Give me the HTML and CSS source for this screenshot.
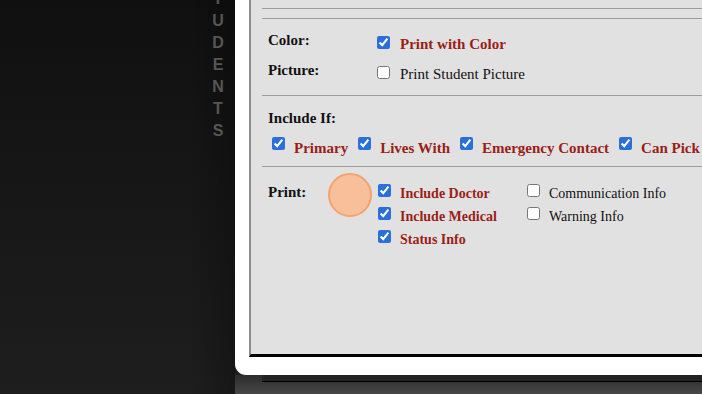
FILE: index.html
```html
<!DOCTYPE html>
<html lang="en">
<head>
  <meta charset="UTF-8" />
  <meta name="viewport" content="width=device-width, initial-scale=1" />
  <title>Student Print Options</title>
  <link rel="stylesheet" href="styles.css">
</head>
<body>
  <div class="screen">

    <!-- Sidebar title -->
    <aside class="sidebar">
      <div class="vtitle">
        <span>T</span><span>U</span><span>D</span><span>E</span><span>N</span><span>T</span><span>S</span>
      </div>
    </aside>

    <main class="main">
      <div class="panel">
        <div class="box">
          <hr class="rule">
          <hr class="rule second">

          <!-- Color / picture -->
          <section class="group g-output">
            <div class="field">
              <div class="field-label">Color:</div>
              <div class="field-opts">
                <label class="opt strong"><input type="checkbox" checked><span>Print with Color</span></label>
              </div>
            </div>
            <div class="field">
              <div class="field-label">Picture:</div>
              <div class="field-opts">
                <label class="opt"><input type="checkbox"><span>Print Student Picture</span></label>
              </div>
            </div>
          </section>

          <hr class="rule">

          <!-- Include if -->
          <section class="group g-include">
            <div class="field-label">Include If:</div>
            <div class="inline-opts">
              <label class="opt strong"><input type="checkbox" checked><span>Primary</span></label>
              <label class="opt strong"><input type="checkbox" checked><span>Lives With</span></label>
              <label class="opt strong"><input type="checkbox" checked><span>Emergency Contact</span></label>
              <label class="opt strong"><input type="checkbox" checked><span>Can Pick Up</span></label>
            </div>
          </section>

          <hr class="rule">

          <!-- Print -->
          <section class="group g-print">
            <div class="field">
              <div class="field-label">Print:</div>
              <div class="opt-cols">
                <div class="opt-col">
                  <label class="opt strong"><input type="checkbox" checked><span>Include Doctor</span></label>
                  <label class="opt strong"><input type="checkbox" checked><span>Include Medical</span></label>
                  <label class="opt strong"><input type="checkbox" checked><span>Status Info</span></label>
                </div>
                <div class="opt-col">
                  <label class="opt"><input type="checkbox"><span>Communication Info</span></label>
                  <label class="opt"><input type="checkbox"><span>Warning Info</span></label>
                </div>
              </div>
            </div>
            <span class="click-mark"></span>
          </section>
        </div>
      </div>

      <div class="footer"><div class="footer-bar"></div></div>
    </main>

  </div>
</body>
</html>
```

FILE: styles.css
```css
html, body {
  margin: 0;
  height: 100%;
}

body {
  font-family: "Liberation Serif", "Times New Roman", serif;
  font-size: 15px;
  color: #111;
  background: linear-gradient(#101010, #1e1e1e);
  overflow: hidden;
}

.screen {
  display: flex;
  height: 394px;
}

/* Sidebar */
.sidebar {
  width: 235px;
  flex: none;
  display: flex;
  justify-content: flex-end;
  padding-right: 7px;
  box-sizing: border-box;
  background: linear-gradient(90deg, rgba(0, 0, 0, 0) 80%, rgba(0, 0, 0, 0.25));
}

.vtitle {
  width: 20px;
  margin-top: -12px;
  display: flex;
  flex-direction: column;
  align-items: center;
  font-family: "Liberation Sans", Arial, sans-serif;
  font-weight: bold;
  font-size: 16px;
  line-height: 22px;
  color: #565656;
}

/* Main panel */
.main {
  flex: 1;
  display: flex;
  flex-direction: column;
  min-width: 0;
}

.panel {
  height: 375px;
  flex: none;
  background: #fff;
  border-bottom-left-radius: 11px;
  padding: 0 0 18px 14px;
  box-sizing: border-box;
  display: flex;
}

.box {
  flex: 1;
  background: #e1e1e1;
  border-left: 2px solid #8c8c8c;
  border-bottom: 3px solid #000;
  padding: 8px 0 0 11px;
  overflow: hidden;
  white-space: nowrap;
  position: relative;
}

.rule {
  margin: 0;
  height: 0;
  border: 0;
  border-top: 1px solid #9c9c9c;
}

.rule.second {
  margin-top: 9px;
}

.group {
  padding-left: 6px;
  position: relative;
}

.field {
  display: flex;
  align-items: flex-start;
}

.field-label {
  width: 105px;
  flex: none;
  font-weight: bold;
  line-height: 17px;
}

.opt {
  display: flex;
  align-items: flex-start;
  line-height: 17px;
}

.opt input {
  width: 13px;
  height: 13px;
  margin: -2px 10px 0 4px;
  accent-color: #2a6fdb;
  flex: none;
}

.opt.strong {
  font-weight: bold;
  color: #9a1e17;
}

/* Color / picture */
.g-output {
  padding-top: 13px;
  padding-bottom: 3px;
}

.g-output .field {
  height: 30px;
}

.g-output .field-opts {
  padding-top: 4px;
}

.g-output .opt input {
  margin-top: 0;
}

/* Include if */
.g-include {
  padding-top: 14px;
  padding-bottom: 9px;
}

.inline-opts {
  display: flex;
  gap: 6px;
  margin-top: 13px;
}

.inline-opts .opt input {
  margin: -3px 9px 0 4px;
}

/* Print */
.g-print {
  padding-top: 17px;
}

.opt-cols {
  display: flex;
  padding-top: 2px;
}

.opt-col {
  width: 149px;
  display: flex;
  flex-direction: column;
  gap: 7px;
}

.opt-col .opt {
  font-size: 14px;
  line-height: 16px;
}

.opt-col .opt input {
  margin: -2px 9px 0 5px;
}

.click-mark {
  position: absolute;
  left: 66px;
  top: 6px;
  width: 40px;
  height: 40px;
  border-radius: 50%;
  background: #f8bf9b;
  border: 2px solid #f6a26e;
}

/* Footer strip */
.footer {
  flex: 1;
  background: linear-gradient(#2c2c2c, #474747);
}

.footer-bar {
  margin-left: 27px;
  height: 6px;
  background: #232323;
  border-bottom: 1px solid #000;
}
```
